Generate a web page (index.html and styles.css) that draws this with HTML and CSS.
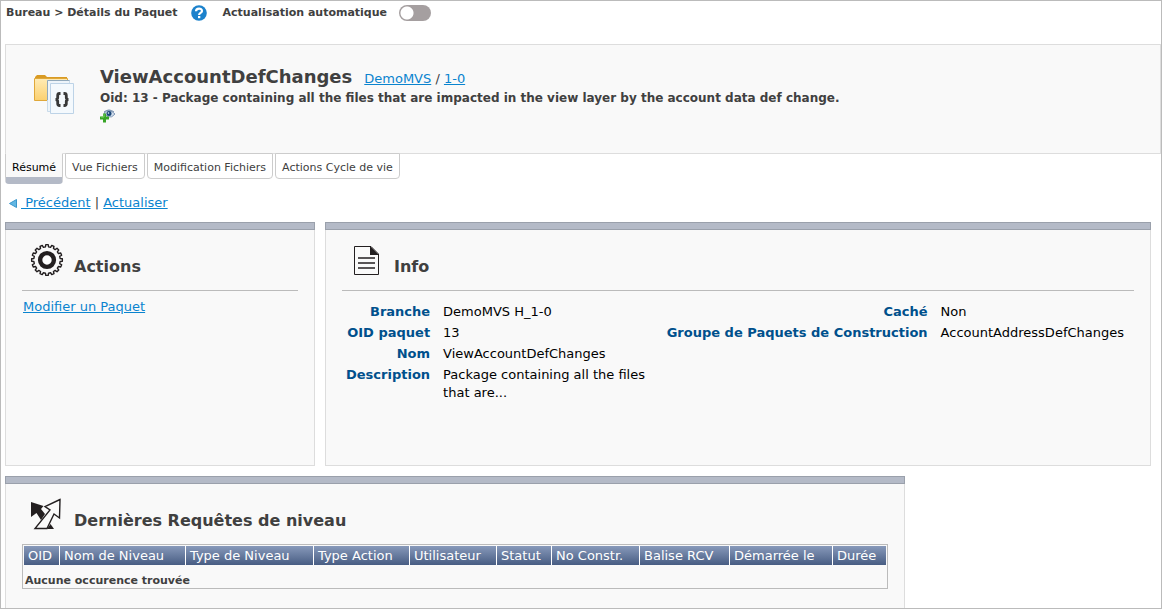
FILE: index.html
```html
<!DOCTYPE html>
<html lang="fr">
<head>
<meta charset="utf-8">
<title>Détails du Paquet</title>
<link rel="stylesheet" href="styles.css">
</head>
<body>
<div class="page">
  <div class="topbar">
    <span class="crumbs">Bureau &gt; Détails du Paquet</span>
    <button class="help" type="button" aria-label="Aide">
      <svg width="16" height="16" viewBox="0 0 16 16"><circle cx="8" cy="8" r="7.8" fill="#1c82cc"/><path d="M5 6.200C5 2.700 11 2.700 11 5.900C11 8 8.100 7.900 8.100 10" fill="none" stroke="#fff" stroke-width="2.200"/><rect x="7" y="11" width="2.300" height="2.200" fill="#fff"/></svg>
    </button>
    <label for="auto">Actualisation automatique</label>
    <input class="switch" type="checkbox" id="auto">
  </div>

  <header class="banner">
    <svg class="package" width="40" height="41" viewBox="0 0 40 41">
      <defs><linearGradient id="folder" x1="0" y1="0" x2="0" y2="1"><stop offset="0" stop-color="#ffebb5"/><stop offset="1" stop-color="#fbd06f"/></linearGradient></defs>
      <path d="M1 3L3 1H11L13 3H33V6H1Z" fill="#d99b24"/>
      <path d="M.5 4.500H33.500V26.500H.5Z" fill="url(#folder)" stroke="#e0a83a"/>
      <path d="M13.500 6.500H35.500V37.500H13.500Z" fill="#edf4fa" stroke="#c9dbea"/>
      <path d="M13.500 26V6.500H35.500" fill="none" stroke="#91a9bc"/>
      <path d="M16.500 9.500H39.500V39.500H16.500Z" fill="#f4f9fd" stroke="#bdd3e7"/>
      <path d="M26.500 19.500H25.500Q23.700 19.500 23.700 21.500V23.500Q23.700 25.500 21.500 25.500Q23.700 25.500 23.700 27.500V29.500Q23.700 31.500 25.500 31.500H26.500M29.500 19.500H30.500Q32.300 19.500 32.300 21.500V23.500Q32.300 25.500 34.500 25.500Q32.300 25.500 32.300 27.500V29.500Q32.300 31.500 30.500 31.500H29.500" fill="none" stroke="#383838" stroke-width="2.800"/>
    </svg>
    <div class="heading">
      <div class="title-row">
        <h1>ViewAccountDefChanges</h1>
        <span class="path"><a href="#">DemoMVS</a> / <a href="#">1-0</a></span>
      </div>
      <p>Oid: 13 - Package containing all the files that are impacted in the view layer by the account data def change.</p>
      <button class="watch" type="button" aria-label="Surveiller">
        <svg width="16" height="14" viewBox="0 0 16 14"><path d="M4 4Q9-1 15 5Q12 9 8 8Z" fill="#d2dfed" stroke="#8299b8"/><path d="M4 3Q9-1 14 3" fill="none" stroke="#6e88a8"/><circle cx="9" cy="4.500" r="2.500" fill="#1b4778"/><circle cx="8.500" cy="4" r=".8" fill="#e9f4ff"/><path d="M3 4.500H6V7.500H9V10.500H6V13.500H3V10.500H0V7.500H3Z" fill="#37a526"/><path d="M4 5V8H1" fill="none" stroke="#7bcf64"/></svg>
      </button>
    </div>
  </header>

  <nav class="tabs">
    <a class="tab active" href="#">Résumé</a>
    <a class="tab" href="#">Vue Fichiers</a>
    <a class="tab" href="#">Modification Fichiers</a>
    <a class="tab" href="#">Actions Cycle de vie</a>
  </nav>

  <div class="links">
    <svg width="8" height="9" viewBox="0 0 8 9"><path d="M7.500.5V8.500L.5 4.500Z" fill="#62b7e3" stroke="#3a96cb"/></svg>
    <span><a href="#">&nbsp;Précédent</a> | <a href="#">Actualiser</a></span>
  </div>

  <main>
    <div class="row">
      <section class="panel actions">
        <div class="panel-head ruled">
          <svg width="34" height="34" viewBox="0 0 34 34"><circle cx="17" cy="17" r="6.900" fill="#fff" stroke="#231f20" stroke-width="4.400"/><path id="gear" d="" fill="none" stroke="#231f20" stroke-width="1.400" stroke-linejoin="round"/></svg>
          <h2>Actions</h2>
        </div>
        <a class="edit" href="#">Modifier un Paquet</a>
      </section>

      <section class="panel info">
        <div class="panel-head ruled">
          <svg width="34" height="34" viewBox="0 0 34 34"><path d="M4.500 3.500H21L28.500 11V31.500H4.500Z" fill="#fafafa" stroke="#231f20"/><path d="M20 3L29 12H20Z" fill="#231f20"/><path d="M8 15H25M8 20H25M8 25H25" stroke="#231f20" stroke-width="1.600"/></svg>
          <h2>Info</h2>
        </div>
        <div class="details">
          <dl>
            <dt>Branche</dt><dd>DemoMVS H_1-0</dd>
            <dt>OID paquet</dt><dd>13</dd>
            <dt>Nom</dt><dd>ViewAccountDefChanges</dd>
            <dt>Description</dt><dd>Package containing all the files that are...</dd>
          </dl>
          <dl>
            <dt>Caché</dt><dd>Non</dd>
            <dt>Groupe de Paquets de Construction</dt><dd>AccountAddressDefChanges</dd>
          </dl>
        </div>
      </section>
    </div>

    <section class="panel requests">
      <div class="panel-head">
        <svg width="34" height="34" viewBox="0 0 34 34"><path d="M1 5L13.500 9L11 12L15 17L11 23L6.500 16L1 20Z" fill="#231f20"/><path d="M17 32L20.500 27L24 32Z" fill="#231f20"/><path d="M30 2.500L15 9.500L20 13L5 31.500H17L24 17L29.500 21Z" fill="#fafafa" stroke="#231f20" stroke-width="1.400"/></svg>
        <h2>Dernières Requêtes de niveau</h2>
      </div>
      <div class="table-box">
        <table>
          <colgroup><col class="c-oid"><col class="c-name"><col class="c-type"><col class="c-action"><col class="c-user"><col class="c-status"><col class="c-build"><col class="c-tag"><col class="c-start"><col class="c-time"></colgroup>
          <thead><tr><th>OID</th><th>Nom de Niveau</th><th>Type de Niveau</th><th>Type Action</th><th>Utilisateur</th><th>Statut</th><th>No Constr.</th><th>Balise RCV</th><th>Démarrée le</th><th>Durée</th></tr></thead>
          <tbody><tr><td colspan="10">Aucune occurence trouvée</td></tr></tbody>
        </table>
      </div>
    </section>
  </main>
</div>
<script src="gear.js"></script>
</body>
</html>
```
FILE: gear.js
```js
// Outline of a cog with sixteen teeth.
const teeth = 16;
const step = (Math.PI * 2) / teeth;
const points = [];
for (let i = 0; i < teeth; i++) {
  [[-0.3, 13.2], [-0.2, 15.4], [0.2, 15.4], [0.3, 13.2]].forEach(([turn, radius]) => {
    const angle = (i + turn) * step;
    points.push((17 + radius * Math.cos(angle)).toFixed(2) + " " + (17 + radius * Math.sin(angle)).toFixed(2));
  });
}
document.getElementById("gear").setAttribute("d", "M" + points.join("L") + "Z");
```
FILE: styles.css
```css
*, *::before { box-sizing: border-box; }
body {
  margin: 0;
  font: 13px/18px Verdana, "DejaVu Sans", sans-serif;
  color: #404040;
  background: #fff;
}
h1, h2, p, dl, dd { margin: 0; }
a { color: #0a84cf; }
button { padding: 0; border: 0; background: none; }
svg { display: block; flex: none; }
.page {
  height: 100vh;
  overflow: hidden;
  border: 1px solid #bbb;
}
.topbar {
  display: flex;
  align-items: center;
  height: 43px;
  padding: 0 5px 20px;
  font-size: 11px;
  font-weight: bold;
}
.help { margin: 0 16px 0 13px; }
.switch {
  appearance: none;
  width: 32px;
  height: 16px;
  margin: 0 0 0 12px;
  border-radius: 8px;
  background: radial-gradient(circle at 8px 8px, #fff 6px, #a59fa0 7px);
}
.banner {
  display: flex;
  height: 110px;
  margin-left: 4px;
  padding: 20px 28px;
  border: 1px solid #ddd;
  background: #f9f9f9;
}
.package { margin: 9px 26px 0 0; }
.title-row { display: flex; align-items: baseline; gap: 12px; }
h1 { font-size: 18px; line-height: 24px; }
.heading p { font-size: 12px; font-weight: bold; }
.watch { margin-top: 2px; }
.tabs {
  display: flex;
  align-items: flex-start;
  gap: 2px;
  height: 31px;
  margin: -1px 4px 0;
}
.tab {
  height: 26px;
  padding: 5px 6px 0;
  border: 1px solid #ccc;
  border-radius: 0 0 4px 4px;
  background: #fff;
  color: #404040;
  font-size: 11px;
  text-decoration: none;
  white-space: nowrap;
}
.tab.active {
  height: 31px;
  border-top-color: #f9f9f9;
  border-bottom: 7px solid #b4bac7;
  background: #f9f9f9;
  color: #000;
}
.links {
  display: flex;
  align-items: center;
  gap: 4px;
  height: 38px;
  padding: 0 8px;
}
main { padding: 0 10px 0 4px; }
.row { display: flex; gap: 10px; margin-bottom: 10px; }
.panel {
  padding: 0 16px;
  border: 1px solid #ddd;
  border-top: 0;
  background: #f9f9f9;
}
.panel::before {
  content: "";
  display: block;
  height: 8px;
  margin: 0 -17px;
  border: 1px solid #9aa0ab;
  background: #b4bac7;
}
.actions { flex: 0 0 310px; height: 244px; }
.info { flex: 1; height: 244px; }
.requests { max-width: 900px; height: 150px; }
.panel-head {
  display: flex;
  gap: 10px;
  height: 60px;
  padding: 13px 8px 0;
}
.ruled { height: 61px; border-bottom: 1px solid #bbb; }
h2 { padding-top: 12px; font-size: 16px; line-height: 24px; }
.edit { display: block; padding: 7px 1px; }
.details {
  display: flex;
  justify-content: space-between;
  padding: 12px 10px 0 4px;
}
dl {
  display: grid;
  grid-template-columns: auto auto;
  align-content: start;
  gap: 3px 13px;
  color: #000;
}
dl:first-child { grid-template-columns: auto 216px; }
dt { color: #00508c; font-weight: bold; text-align: right; white-space: nowrap; }
.table-box { height: 45px; padding: 1px; border: 1px solid #bbb; }
table {
  width: 100%;
  table-layout: fixed;
  border-collapse: separate;
  border-spacing: 0;
}
th {
  height: 19px;
  padding: 0 4px;
  border-right: 1px solid #fff;
  background: linear-gradient(#8799ba, #485d83);
  color: #fff;
  font-weight: normal;
  text-align: left;
  white-space: nowrap;
}
th:last-child { border-right: 0; }
td { padding: 7px 1px 0; font-size: 11px; font-weight: bold; }
.c-oid { width: 36px; }
.c-name { width: 126px; }
.c-type { width: 128px; }
.c-action { width: 96px; }
.c-user { width: 87px; }
.c-status { width: 55px; }
.c-build { width: 88px; }
.c-tag { width: 90px; }
.c-start { width: 103px; }
```
